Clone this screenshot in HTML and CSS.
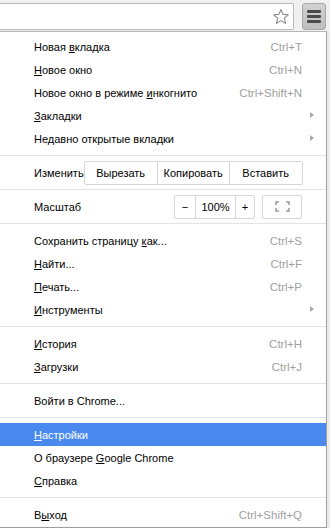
FILE: index.html
```html
<!DOCTYPE html>
<html lang="ru">
<head>
<meta charset="utf-8">
<link rel="stylesheet" href="styles.css">
</head>
<body>
<div class="toolbar">
  <div class="omnibox">
    <svg class="star" width="18" height="18" viewBox="0 0 18 18"><path d="M9 1.5 L11.1 6.4 L16.3 6.8 L12.3 10.2 L13.6 15.4 L9 12.6 L4.4 15.4 L5.7 10.2 L1.7 6.8 L6.9 6.4 Z" fill="#fff" stroke="#8a8a8a" stroke-width="1.1" stroke-linejoin="round"/></svg>
  </div>
  <div class="menubtn">
    <span class="bar"></span><span class="bar"></span><span class="bar"></span>
  </div>
</div>
<div class="menu">
  <div class="item"><span class="label">Новая <u>в</u>кладка</span><span class="key">Ctrl+T</span></div>
  <div class="item"><span class="label"><u>Н</u>овое окно</span><span class="key">Ctrl+N</span></div>
  <div class="item"><span class="label">Новое окно в режиме <u>и</u>нкогнито</span><span class="key">Ctrl+Shift+N</span></div>
  <div class="item"><span class="label"><u>З</u>акладки</span><span class="arrow"></span></div>
  <div class="item"><span class="label">Недавно открытые вкладки</span><span class="arrow"></span></div>
  <div class="sep"></div>
  <div class="item">
    <span class="label">Изменить</span>
    <div class="group edit">
      <span class="btn w72">Вырезать</span><span class="btn w72">Копировать</span><span class="btn w73">Вставить</span>
    </div>
  </div>
  <div class="sep"></div>
  <div class="item">
    <span class="label">Масштаб</span>
    <div class="zoomwrap">
      <div class="group">
        <span class="btn w20">−</span><span class="btn w40">100%</span><span class="btn w19">+</span>
      </div>
      <span class="btn full">
        <svg width="15" height="11" viewBox="0 0 15 11"><path d="M1 4V1H4M11 1H14V4M14 7V10H11M4 10H1V7" fill="none" stroke="#9a9a9a" stroke-width="1.5"/></svg>
      </span>
    </div>
  </div>
  <div class="sep"></div>
  <div class="item"><span class="label">Сохранить страницу <u>к</u>ак...</span><span class="key">Ctrl+S</span></div>
  <div class="item"><span class="label"><u>Н</u>айти...</span><span class="key">Ctrl+F</span></div>
  <div class="item"><span class="label"><u>П</u>ечать...</span><span class="key">Ctrl+P</span></div>
  <div class="item"><span class="label"><u>И</u>нструменты</span><span class="arrow"></span></div>
  <div class="sep"></div>
  <div class="item"><span class="label"><u>И</u>стория</span><span class="key">Ctrl+H</span></div>
  <div class="item"><span class="label"><u>З</u>агрузки</span><span class="key">Ctrl+J</span></div>
  <div class="sep"></div>
  <div class="item"><span class="label">Войти в Chrome...</span></div>
  <div class="sep"></div>
  <div class="item active"><span class="label"><u>Н</u>астройки</span></div>
  <div class="item"><span class="label">О браузере <u>G</u>oogle Chrome</span></div>
  <div class="item"><span class="label"><u>С</u>правка</span></div>
  <div class="sep"></div>
  <div class="item"><span class="label">В<u>ы</u>ход</span><span class="key">Ctrl+Shift+Q</span></div>
</div>
</body>
</html>
```
FILE: styles.css
```css
html, body {
  margin: 0;
  padding: 0;
}
body {
  width: 330px;
  height: 528px;
  overflow: hidden;
  background: #ececec;
  font-family: "Liberation Sans", Arial, sans-serif;
  font-size: 11px;
  color: #000;
}
.toolbar {
  display: flex;
  align-items: center;
  height: 31px;
  padding-top: 2px;
  box-sizing: border-box;
  background: #f0f0f0;
}
.omnibox {
  flex: 0 0 294px;
  height: 27px;
  box-sizing: border-box;
  background: #fff;
  border: 1px solid #b9b9b9;
  border-left: none;
  border-radius: 0 2px 2px 0;
  display: flex;
  align-items: center;
  justify-content: flex-end;
  padding-right: 3px;
}
.star { display: block; }
.menubtn {
  margin-left: 8px;
  width: 24px;
  height: 27px;
  box-sizing: border-box;
  border: 1px solid #a8a8a8;
  border-radius: 3px;
  background: linear-gradient(#d2d2d2, #bdbdbd);
  display: flex;
  flex-direction: column;
  align-items: center;
  justify-content: center;
  gap: 2px;
}
.bar {
  width: 14px;
  height: 3px;
  border-radius: 1px;
  background: #4a4a4a;
}
.menu {
  width: 327px;
  height: 497px;
  box-sizing: border-box;
  background: #fff;
  border-top: 1px solid #b6b6b6;
  border-right: 1px solid #9d9d9d;
  border-bottom: 1px solid #9d9d9d;
  padding-top: 3px;
  display: flex;
  flex-direction: column;
}
.item {
  height: 23px;
  flex: 0 0 auto;
  display: flex;
  align-items: center;
  padding-left: 34px;
  padding-right: 24px;
  position: relative;
  white-space: nowrap;
}
.item u { text-decoration: underline; text-underline-offset: 1px; }
.item.active {
  background: #4a8af0;
  color: #fff;
}
.label { flex: 1 1 auto; }
.key {
  color: #a0a0a0;
  font-size: 11.5px;
}
.arrow {
  position: absolute;
  right: 12px;
  top: 8px;
  width: 0;
  height: 0;
  border-left: 4px solid #a8a8a8;
  border-top: 3.5px solid transparent;
  border-bottom: 3.5px solid transparent;
}
.sep {
  flex: 0 0 1px;
  height: 1px;
  background: #e3e3e3;
  margin: 5px 0;
}
.group {
  display: flex;
  border: 1px solid #d6d6d6;
  border-radius: 2px;
  height: 24px;
  box-sizing: border-box;
  background: #fff;
}
.btn {
  display: flex;
  align-items: center;
  justify-content: center;
  height: 100%;
  box-sizing: border-box;
}
.group .btn + .btn { border-left: 1px solid #d6d6d6; }
.w72 { width: 72px; }
.w73 { width: 73px; }
.w20 { width: 20px; }
.w40 { width: 40px; }
.w19 { width: 19px; }
.zoomwrap {
  display: flex;
  align-items: center;
  gap: 7px;
}
.full {
  width: 40px;
  height: 24px;
  border: 1px solid #d6d6d6;
  border-radius: 2px;
}
```
